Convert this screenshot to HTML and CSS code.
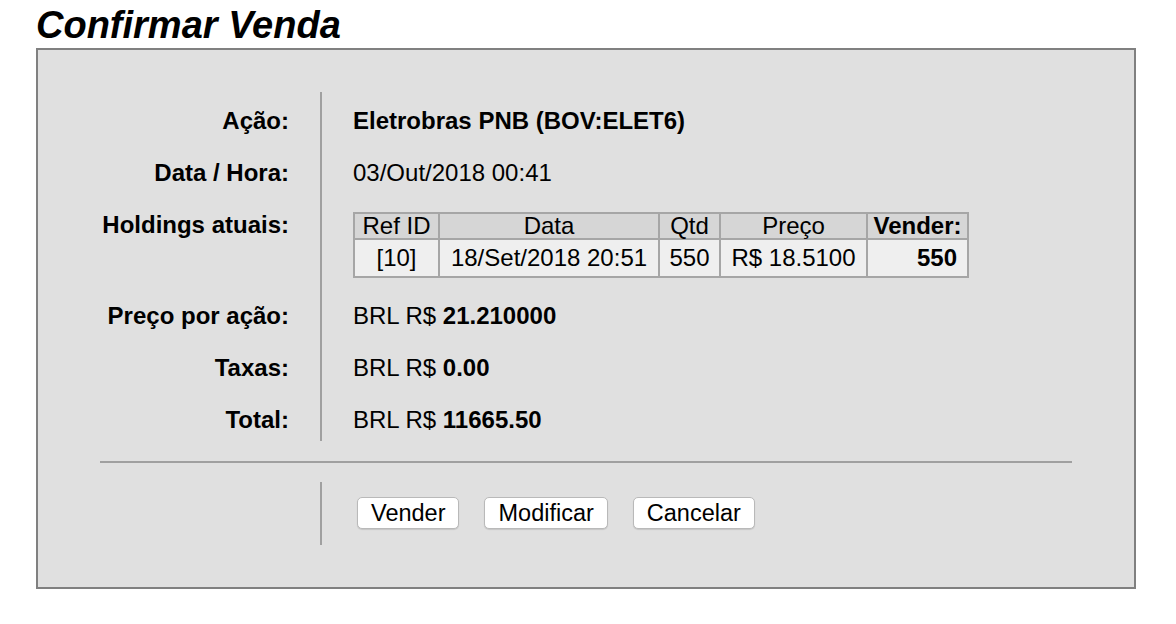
FILE: index.html
```html
<!DOCTYPE html>
<html lang="pt">
<head>
<meta charset="utf-8">
<title>Confirmar Venda</title>
<link rel="stylesheet" href="styles.css">
</head>
<body>
<div class="page">
  <h1 class="title">Confirmar Venda</h1>
  <div class="panel">
    <div class="details">
      <div class="label">Ação:</div>
      <div class="value strong">Eletrobras PNB (BOV:ELET6)</div>

      <div class="label">Data / Hora:</div>
      <div class="value">03/Out/2018 00:41</div>

      <div class="label">Holdings atuais:</div>
      <div class="value value-table">
        <table class="holdings">
          <colgroup>
            <col class="c-ref">
            <col class="c-data">
            <col class="c-qtd">
            <col class="c-preco">
            <col class="c-vender">
          </colgroup>
          <thead>
            <tr>
              <th>Ref ID</th>
              <th>Data</th>
              <th>Qtd</th>
              <th>Preço</th>
              <th class="bold">Vender:</th>
            </tr>
          </thead>
          <tbody>
            <tr>
              <td>[10]</td>
              <td>18/Set/2018 20:51</td>
              <td>550</td>
              <td>R$ 18.5100</td>
              <td class="sell">550</td>
            </tr>
          </tbody>
        </table>
      </div>

      <div class="label">Preço por ação:</div>
      <div class="value">BRL R$ <b>21.210000</b></div>

      <div class="label">Taxas:</div>
      <div class="value">BRL R$ <b>0.00</b></div>

      <div class="label last">Total:</div>
      <div class="value last">BRL R$ <b>11665.50</b></div>
    </div>

    <div class="sep"></div>

    <div class="actions">
      <div class="spacer"></div>
      <div class="buttons">
        <button class="btn" type="button">Vender</button>
        <button class="btn" type="button">Modificar</button>
        <button class="btn" type="button">Cancelar</button>
      </div>
    </div>
  </div>
</div>
</body>
</html>
```

FILE: styles.css
```css
html, body {
  margin: 0;
  padding: 0;
  background: #ffffff;
}

body {
  font-family: "Liberation Sans", Arial, sans-serif;
  color: #000;
}

.page {
  padding: 3px 0 0 36px;
}

.title {
  margin: 0;
  font-size: 38px;
  line-height: 44px;
  font-weight: bold;
  font-style: italic;
  height: 45px;
}

.panel {
  width: 1100px;
  box-sizing: border-box;
  border: 2px solid #808080;
  background: #e0e0e0;
  padding: 42px 0;
}

.details {
  display: grid;
  grid-template-columns: 282px 1fr;
  font-size: 24px;
  line-height: 28px;
}

.label {
  text-align: right;
  font-weight: bold;
  padding: 15px 31px 9px 0;
}

.value {
  border-left: 2px solid #a0a0a0;
  padding: 15px 0 9px 31px;
}

.value.strong {
  font-weight: bold;
}

.value-table {
  padding-top: 16px;
}

.label.last,
.value.last {
  padding-bottom: 7px;
}

.holdings {
  border-collapse: collapse;
  table-layout: fixed;
  width: 616px;
  font-size: 24px;
}

.c-ref { width: 85px; }
.c-data { width: 220px; }
.c-qtd { width: 61px; }
.c-preco { width: 147px; }
.c-vender { width: 101px; }

.holdings th,
.holdings td {
  border: 2px solid #a6a6a6;
  padding: 0;
  text-align: center;
  white-space: nowrap;
}

.holdings th {
  background: #d6d6d6;
  font-weight: normal;
  height: 24px;
  line-height: 24px;
}

.holdings th.bold {
  font-weight: bold;
}

.holdings td {
  background: #efefef;
  height: 36px;
  line-height: 28px;
}

.holdings td.sell {
  text-align: right;
  font-weight: bold;
  padding-right: 10px;
}

.sep {
  height: 2px;
  background: #a0a0a0;
  margin: 20px 62px 0;
}

.actions {
  display: grid;
  grid-template-columns: 282px 1fr;
  margin-top: 19px;
}

.buttons {
  border-left: 2px solid #a0a0a0;
  padding: 15px 0 16px 35px;
  display: flex;
  gap: 25px;
}

.btn {
  font-family: "Liberation Sans", Arial, sans-serif;
  font-size: 23.5px;
  height: 32px;
  box-sizing: border-box;
  padding: 0 13px;
  line-height: 28px;
  background: #ffffff;
  color: #000;
  border: 1px solid #b9b9b9;
  border-radius: 5px;
  box-shadow: 0 1px 1px rgba(0, 0, 0, 0.12);
  cursor: pointer;
}
```
